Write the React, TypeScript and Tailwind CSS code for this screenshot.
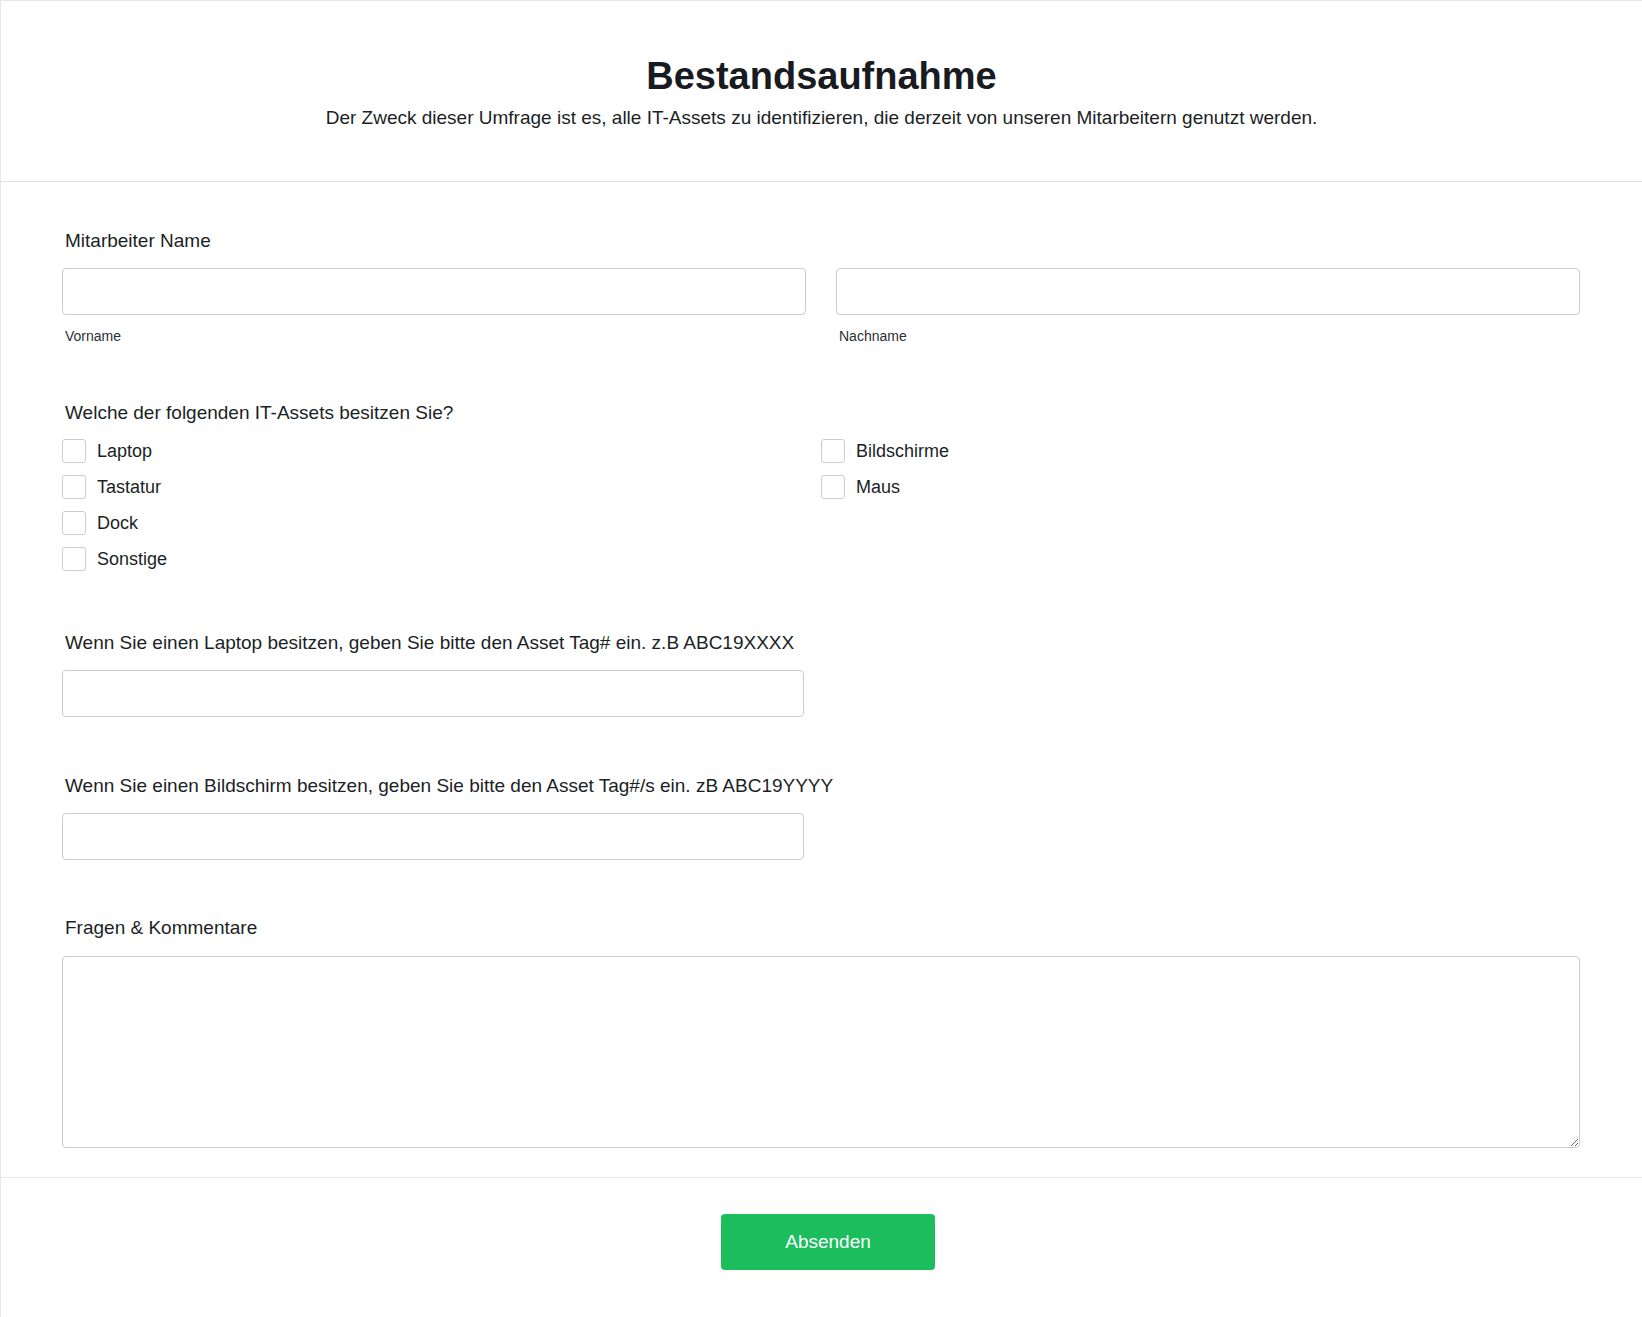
import { useState } from "react";

const assetsLeft = ["Laptop", "Tastatur", "Dock", "Sonstige"];
const assetsRight = ["Bildschirme", "Maus"];

function Check({ label }: { label: string }) {
  const [checked, setChecked] = useState(false);
  return (
    <label className="flex items-center h-6 cursor-pointer">
      <input
        type="checkbox"
        className="appearance-none w-6 h-6 border border-[#c9cdd5] rounded-[3px] bg-white checked:bg-[#1bbd5c] checked:border-[#1bbd5c]"
        checked={checked}
        onChange={() => setChecked(!checked)}
      />
      <span className="ml-[11px] text-[18px] text-[#1b1f26]">{label}</span>
    </label>
  );
}

export default function App() {
  return (
    <div className="min-h-screen bg-white border-l border-t border-[#e4e7ec] font-['Liberation_Sans',Arial,sans-serif] text-[#1b1f26]">

      {/* Header */}

      <div className="h-[181px] border-b border-[#dfe2e8] flex flex-col items-center pt-[53px]">
        <h1 className="text-[38px] leading-[44px] font-bold text-[#181b22]">Bestandsaufnahme</h1>
        <p className="mt-[7px] text-[19px] leading-[26px]">
          Der Zweck dieser Umfrage ist es, alle IT-Assets zu identifizieren, die derzeit von unseren Mitarbeitern genutzt werden.
        </p>
      </div>

      {/* Form */}

      <div className="pl-[61px] pr-[62px] pt-[46px] pb-[29px]">

        <p className="text-[19px] leading-[26px] pl-[3px]">Mitarbeiter Name</p>
        <div className="grid grid-cols-2 gap-[30px] mt-[14px]">
          <div>
            <input className="w-full h-[47px] border border-[#c9ccd5] rounded-[4px] px-3 outline-none" />
            <p className="mt-[12px] text-[14px] leading-[18px] pl-[3px] text-[#2b2f36]">Vorname</p>
          </div>
          <div>
            <input className="w-full h-[47px] border border-[#c9ccd5] rounded-[4px] px-3 outline-none" />
            <p className="mt-[12px] text-[14px] leading-[18px] pl-[3px] text-[#2b2f36]">Nachname</p>
          </div>
        </div>

        <p className="mt-[55px] text-[19px] leading-[26px] pl-[3px]">Welche der folgenden IT-Assets besitzen Sie?</p>
        <div className="grid grid-cols-2 mt-[13px]">
          <div className="flex flex-col gap-3">
            {assetsLeft.map((a) => (
              <Check key={a} label={a} />
            ))}
          </div>
          <div className="flex flex-col gap-3">
            {assetsRight.map((a) => (
              <Check key={a} label={a} />
            ))}
          </div>
        </div>

        <p className="mt-[59px] text-[19px] leading-[26px] pl-[3px]">
          Wenn Sie einen Laptop besitzen, geben Sie bitte den Asset Tag# ein. z.B ABC19XXXX
        </p>
        <input className="mt-[14px] w-[742px] h-[47px] border border-[#c9ccd5] rounded-[4px] px-3 outline-none block" />

        <p className="mt-[56px] text-[19px] leading-[26px] pl-[3px]">
          Wenn Sie einen Bildschirm besitzen, geben Sie bitte den Asset Tag#/s ein. zB ABC19YYYY
        </p>
        <input className="mt-[14px] w-[742px] h-[47px] border border-[#c9ccd5] rounded-[4px] px-3 outline-none block" />

        <p className="mt-[55px] text-[19px] leading-[26px] pl-[3px]">Fragen &amp; Kommentare</p>
        <textarea className="mt-[15px] w-full h-[192px] border border-[#c9ccd5] rounded-[4px] p-3 outline-none block" />

      </div>

      {/* Footer */}

      <div className="border-t border-[#e6e9ee] flex justify-center pt-[36px] pb-[48px]">
        <button className="ml-[13px] w-[214px] h-[56px] bg-[#1bbd5c] rounded-[4px] text-white text-[19px]">
          Absenden
        </button>
      </div>

    </div>
  );
}
